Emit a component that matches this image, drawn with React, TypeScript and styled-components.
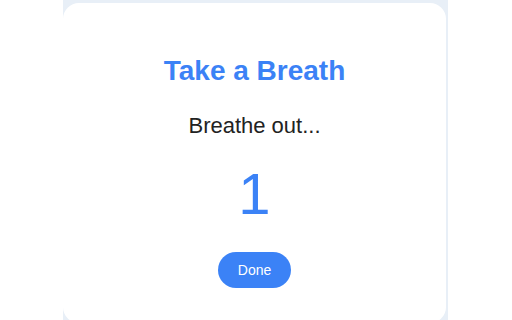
import styled, { createGlobalStyle } from 'styled-components'

const GlobalStyle = createGlobalStyle`
  html, body {
    margin: 0;
    padding: 0;
    background: #ffffff;
    font-family: "Liberation Sans", Arial, sans-serif;
  }
`

export default function App() {
  return (
    <>
      <GlobalStyle />
      <Page>
        <Frame>
          <Card>
            <Title>Take a Breath</Title>
            <Prompt>Breathe out...</Prompt>
            <Count>1</Count>
            <DoneBtn>Done</DoneBtn>
          </Card>
        </Frame>
      </Page>
    </>
  )
}

const Page = styled.div`
  width: 512px;
  height: 320px;
  overflow: hidden;
  display: flex;
  justify-content: center;
`

const Frame = styled.div`
  flex-shrink: 0;
  width: 385px;
  height: 323px;
  margin-left: -1px;
  padding: 3px 2px 0 0;
  box-sizing: border-box;
  background: #e8eff7;
`

const Card = styled.div`
  height: 100%;
  background: #ffffff;
  border-radius: 16px;
  display: flex;
  flex-direction: column;
  align-items: center;
  padding-top: 52px;
  box-sizing: border-box;
`

const Title = styled.h1`
  margin: 0;
  font-size: 28px;
  line-height: 32px;
  font-weight: 700;
  color: #3b82f6;
`

const Prompt = styled.div`
  margin-top: 26px;
  font-size: 22px;
  line-height: 26px;
  color: #222222;
`

const Count = styled.div`
  margin-top: 23px;
  font-size: 58px;
  line-height: 64px;
  color: #3b82f6;
`

const DoneBtn = styled.button`
  margin-top: 26px;
  height: 36px;
  padding: 0 20px;
  border: none;
  border-radius: 18px;
  background: #3b82f6;
  color: #ffffff;
  font-family: "Liberation Sans", Arial, sans-serif;
  font-size: 14px;
  cursor: pointer;
`
